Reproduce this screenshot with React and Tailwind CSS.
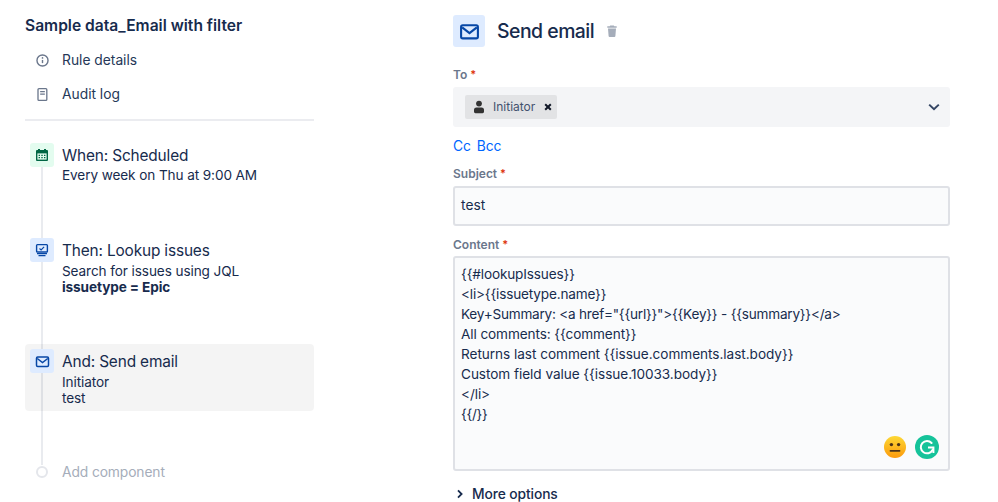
const Mail = ({ s = 16 }) => (
  <svg width={s} height={s} viewBox="0 0 20 20" fill="none">
    <rect x="2" y="4" width="16" height="12.5" rx="1.6" stroke="#0747a6" strokeWidth="2" />
    <path d="M3 6l7 5.5L17 6" stroke="#0747a6" strokeWidth="2" fill="none" />
  </svg>
);

const Req = ({ children }) => (
  <div className="flex items-start gap-[3px] h-4 text-[12px] leading-4 font-semibold text-[#6b778c]">
    <span>{children}</span>
    <span className="text-[#de350b] text-[11px] leading-[14px]">*</span>
  </div>
);

const Step = ({ bg, icon, title, children, className = "" }) => (
  <div className={`flex rounded-[4px] ${className}`}>
    <div className={`w-6 h-6 rounded-[3px] ml-[5px] mt-[5px] flex items-center justify-center shrink-0 ${bg}`}>{icon}</div>
    <div className="ml-[8px] mt-[6px] text-[13.6px] tracking-[-0.1px] leading-[16px] text-[#172b4d]">
      <div className="text-[15.4px] tracking-[-0.15px] leading-6 -mb-[1px]">{title}</div>
      {children}
    </div>
  </div>
);

const lines = [
  ["{{#lookupIssues}}", "tracking-[-0.15px]"],
  ["<li>{{issuetype.name}}", "tracking-[-0.18px]"],
  ['Key+Summary: <a href="{{url}}">{{Key}} - {{summary}}</a>', "tracking-[-0.23px]"],
  ["All comments: {{comment}}", "tracking-[-0.1px]"],
  ["Returns last comment {{issue.comments.last.body}}", "tracking-[-0.04px]"],
  ["Custom field value {{issue.10033.body}}", "tracking-[-0.05px]"],
  ["</li>", "tracking-[-0.1px]"],
  ["{{/}}", "tracking-[-0.3px]"],
];

export default function App() {
  return (
    <div className="w-[998px] h-[502px] overflow-hidden bg-white flex text-[#172b4d] font-['Inter','Liberation_Sans',sans-serif]">
      <aside className="w-[289px] ml-[25px] shrink-0 relative">
        <div className="absolute left-[16px] top-[165px] h-[300px] w-[2px] bg-[#e9ebef]" />
        <h1 className="mt-[15px] text-[15.6px] leading-[22px] font-semibold">Sample data_Email with filter</h1>
        <nav className="text-[13.8px] leading-5 text-[#253858]">
          <div className="flex items-center mt-[13px] h-5 ml-[10px] gap-[12px]">
            <svg width="15" height="15" viewBox="0 0 16 16" fill="none">
              <circle cx="8" cy="8" r="5.9" stroke="#6b778c" strokeWidth="1.5" />
              <path d="M8 7.4v3.4" stroke="#6b778c" strokeWidth="1.5" />
              <circle cx="8" cy="5.2" r="0.9" fill="#6b778c" />
            </svg>
            <span>Rule details</span>
          </div>
          <div className="flex items-center mt-[14px] h-5 ml-[10px] gap-[12px]">
            <svg width="15" height="15" viewBox="0 0 16 16" fill="none">
              <rect x="3.2" y="1.8" width="9.4" height="12.4" rx="1" stroke="#6b778c" strokeWidth="1.4" />
              <path d="M5.5 5h5M5.5 7.5h5" stroke="#6b778c" strokeWidth="1.3" />
            </svg>
            <span>Audit log</span>
          </div>
        </nav>
        <div className="h-[2px] bg-[#ebecf0] mt-[15px]" />
        <div className="relative mt-[17px]">
          <Step
            bg="bg-[#e3fcef]"
            title="When: Scheduled"
            icon={
              <svg width="14" height="14" viewBox="0 0 14 14">
                <path d="M1 3a1 1 0 011-1h1V1h2v1h4V1h2v1h1a1 1 0 011 1v9a1 1 0 01-1 1H2a1 1 0 01-1-1z" fill="#006644" />
                <rect x="2.4" y="5.4" width="9.2" height="6.2" fill="#e3fcef" />
                <path d="M3.6 6.8h1.4v1.2H3.6zM6.3 6.8h1.4v1.2H6.3zM9 6.8h1.4v1.2H9zM3.6 9h1.4v1.2H3.6zM6.3 9h1.4v1.2H6.3zM9 9h1.4v1.2H9z" fill="#006644" />
              </svg>
            }
          >
            <div>Every week on Thu at 9:00 AM</div>
          </Step>
          <Step
            className="mt-[50px]"
            bg="bg-[#deebff]"
            title="Then: Lookup issues"
            icon={
              <svg width="14" height="14" viewBox="0 0 14 14" fill="none">
                <rect x="1.6" y="1.6" width="10.8" height="7.4" rx="0.8" stroke="#0747a6" strokeWidth="1.4" />
                <path d="M4.5 5.5l1.6 1.4 3-3" stroke="#0747a6" strokeWidth="1.2" />
                <path d="M2 10.6h10M3.5 12.6h7" stroke="#0747a6" strokeWidth="1.4" />
              </svg>
            }
          >
            <div className="mt-[1px]">Search for issues using JQL</div>
            <div className="font-bold">issuetype = Epic</div>
          </Step>
          <div className="relative mt-[49px]">
            <div className="absolute inset-0 rounded-[4px] bg-black/[0.045]" />
            <Step
              className="relative h-[67px]"
              bg="bg-[#deebff]"
              title="And: Send email"
              icon={<Mail s={15} />}
            >
              <div className="mt-[1px]">Initiator</div>
              <div>test</div>
            </Step>
          </div>
          <div className="flex items-center mt-[51px] h-5 text-[13.8px] tracking-[-0.1px] text-[#a5adba]">
            <div className="w-3 h-3 ml-[11px] rounded-full border-2 border-[#e4e6eb] bg-white relative" />
            <span className="ml-[14px]">Add component</span>
          </div>
        </div>
      </aside>

      <main className="w-[497px] ml-[139px] shrink-0">
        <div className="flex items-center mt-[15px] h-8">
          <div className="w-8 h-8 rounded-[3px] bg-[#deebff] flex items-center justify-center">
            <Mail s={21} />
          </div>
          <h2 className="ml-3 text-[19.4px] leading-8 font-medium tracking-[-0.5px]">Send email</h2>
          <svg className="ml-[11px]" width="14" height="14" viewBox="0 0 14 14">
            <path d="M5.2 1.4h3.6l.5.9h2.4v1.4H2.3V2.3h2.4zM3 4.6h8l-.6 7.4a1 1 0 01-1 .9H4.6a1 1 0 01-1-.9z" fill="#a5adba" />
          </svg>
        </div>

        <div className="mt-[20px]"><Req>To</Req></div>
        <div className="mt-[4px] h-10 rounded-[3px] bg-[#f4f5f7] flex items-center justify-between pl-3 pr-[8px]">
          <div className="h-6 rounded-[2px] bg-[#e2e3e5] flex items-center pl-2 pr-[4px] text-[12px] text-[#42526e]">
            <svg width="12" height="14" viewBox="0 0 12 14">
              <circle cx="6" cy="3.6" r="2.9" fill="#333333" />
              <path d="M1 9.6A2.4 2.4 0 013.4 7.4h5.2A2.4 2.4 0 0111 9.6v2.2a1.4 1.4 0 01-1.4 1.4H2.4A1.4 1.4 0 011 11.8z" fill="#333333" />
            </svg>
            <span className="ml-[8px]">Initiator</span>
            <svg className="ml-[8px]" width="10" height="10" viewBox="0 0 10 10">
              <path d="M2.2 2.2l5.6 5.6M7.8 2.2L2.2 7.8" stroke="#111827" strokeWidth="2" />
            </svg>
          </div>
          <svg width="16" height="16" viewBox="0 0 16 16" fill="none">
            <path d="M3.2 5.6L8 10.2l4.8-4.6" stroke="#344563" strokeWidth="2" />
          </svg>
        </div>
        <div className="mt-[9px] flex gap-[6px] text-[13.8px] tracking-[-0.1px] leading-5 text-[#0065ff]">
          <span>Cc</span>
          <span>Bcc</span>
        </div>

        <div className="mt-[10px]"><Req>Subject</Req></div>
        <div className="mt-[4px] h-10 rounded-[3px] bg-[#fafbfc] border-2 border-[#dfe1e6] flex items-center px-[6px] pb-[1px] text-[13.8px]">test</div>

        <div className="mt-[11px]"><Req>Content</Req></div>
        <div className="relative mt-[3px] h-[215px] rounded-[3px] bg-[#fafbfc] border-2 border-[#dfe1e6] px-[6px] pt-[6px] text-[13.6px] leading-5">
          {lines.map(([l, t]) => <div key={l} className={t}>{l}</div>)}
          <div className="absolute right-[9px] bottom-[10px] flex items-center gap-[9px]">
            <svg width="22" height="22" viewBox="0 0 22 22">
              <defs>
                <linearGradient id="e" x1="0" y1="0" x2="0" y2="1">
                  <stop offset="0" stopColor="#fdd835" />
                  <stop offset="1" stopColor="#fb9a0c" />
                </linearGradient>
              </defs>
              <circle cx="11" cy="11" r="11" fill="url(#e)" />
              <circle cx="7.4" cy="8.6" r="1.7" fill="#4a3218" />
              <circle cx="14.6" cy="8.6" r="1.7" fill="#4a3218" />
              <rect x="5.6" y="14" width="10.8" height="1.7" rx="0.8" fill="#4a3218" />
            </svg>
            <svg width="24" height="24" viewBox="0 0 24 24" fill="none">
              <circle cx="12" cy="12" r="12" fill="#15c39a" />
              <path d="M16.6 8a6.2 6.2 0 10.9 7" stroke="#fff" strokeWidth="2" strokeLinecap="round" />
              <path d="M13 12.6h5.4V18" stroke="#fff" strokeWidth="2" />
            </svg>
          </div>
        </div>
        <div className="mt-[13px] flex items-center gap-[7px] pl-[2px] text-[13.8px] tracking-[-0.1px] leading-5 font-medium">
          <svg width="10" height="10" viewBox="0 0 10 10" fill="none">
            <path d="M3 1.4L6.6 5 3 8.6" stroke="#172b4d" strokeWidth="1.8" />
          </svg>
          <span>More options</span>
        </div>
      </main>
    </div>
  );
}
